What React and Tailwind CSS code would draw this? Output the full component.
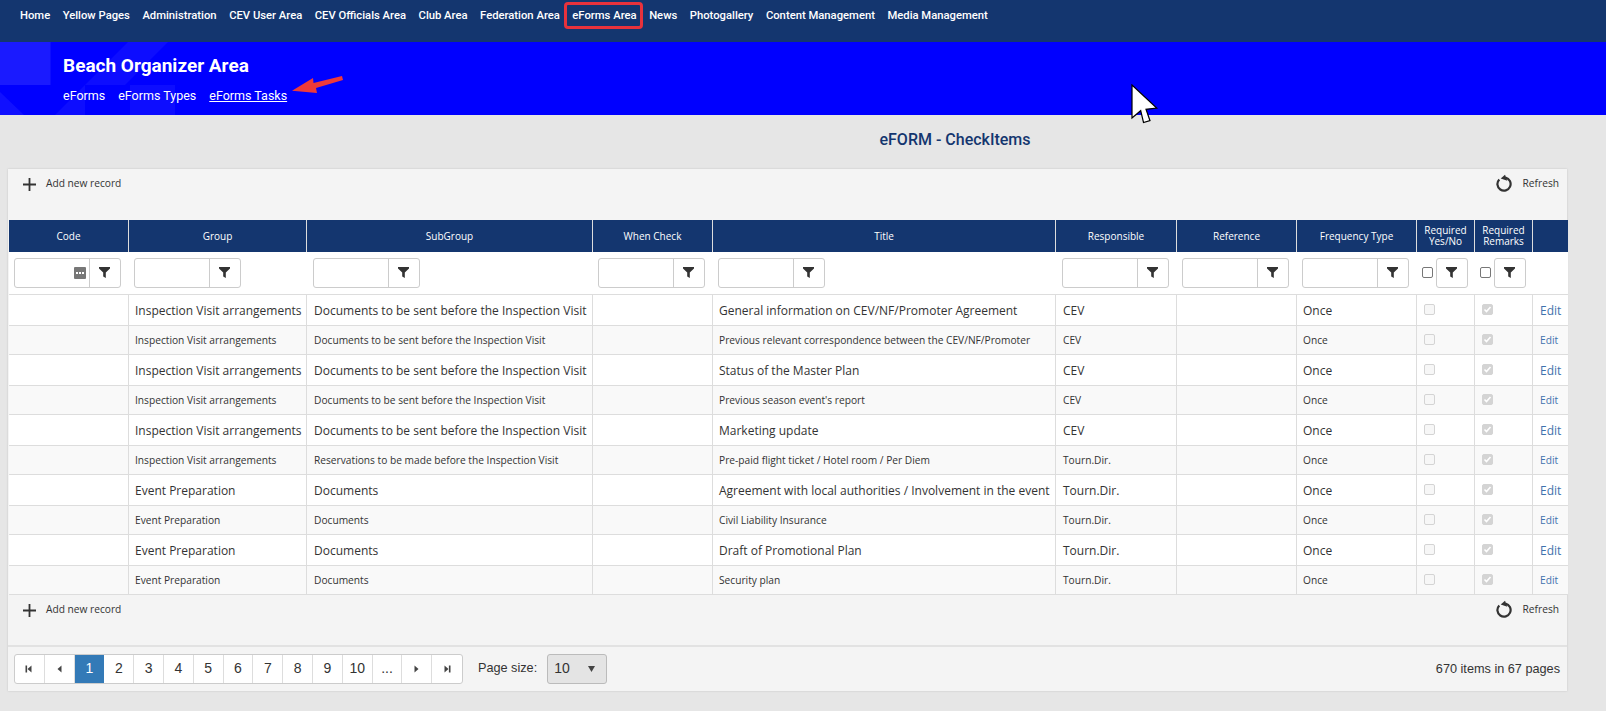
const NAV_ITEMS = [
  'Home',
  'Yellow Pages',
  'Administration',
  'CEV User Area',
  'CEV Officials Area',
  'Club Area',
  'Federation Area',
  'eForms Area',
  'News',
  'Photogallery',
  'Content Management',
  'Media Management',
];

const IV = 'Inspection Visit arrangements';
const DOCS = 'Documents to be sent before the Inspection Visit';
const EP = 'Event Preparation';

const ROWS = [
  [IV, DOCS, 'General information on CEV/NF/Promoter Agreement', 'CEV'],
  [IV, DOCS, 'Previous relevant correspondence between the CEV/NF/Promoter', 'CEV'],
  [IV, DOCS, 'Status of the Master Plan', 'CEV'],
  [IV, DOCS, "Previous season event's report", 'CEV'],
  [IV, DOCS, 'Marketing update', 'CEV'],
  [IV, 'Reservations to be made before the Inspection Visit', 'Pre-paid flight ticket / Hotel room / Per Diem', 'Tourn.Dir.'],
  [EP, 'Documents', 'Agreement with local authorities / Involvement in the event', 'Tourn.Dir.'],
  [EP, 'Documents', 'Civil Liability Insurance', 'Tourn.Dir.'],
  [EP, 'Documents', 'Draft of Promotional Plan', 'Tourn.Dir.'],
  [EP, 'Documents', 'Security plan', 'Tourn.Dir.'],
];

const COLUMNS = [
  { label: 'Code', width: 'w-[120px]' },
  { label: 'Group', width: 'w-[178px]' },
  { label: 'SubGroup', width: 'w-[286px]' },
  { label: 'When Check', width: 'w-[120px]' },
  { label: 'Title', width: 'w-[343px]' },
  { label: 'Responsible', width: 'w-[121px]' },
  { label: 'Reference', width: 'w-[120px]' },
  { label: 'Frequency Type', width: 'w-[120px]' },
  { label: 'Required Yes/No', width: 'w-[58px]' },
  { label: 'Required Remarks', width: 'w-[58px]' },
  { label: '', width: 'w-[35px]' },
];

const PAGES = ['1', '2', '3', '4', '5', '6', '7', '8', '9', '10', '...'];

function FunnelIcon() {
  return (
    <svg width="11" height="11" viewBox="0 0 11 11" className="fill-[#333]">
      <path d="M0 0h11v1.5L6.8 5.4V11L4.2 9.4v-4L0 1.5z" />
    </svg>
  );
}

function RefreshIcon() {
  return (
    <svg width="17" height="18" viewBox="0 0 17 18" fill="none" className="shrink-0">
      <path d="M9.5 3.6A6.6 6.6 0 1 1 3.3 5.4" stroke="#333" strokeWidth="2.2" />
      <path d="M9 0.7l2.3 6-6.6-2.2z" fill="#333" />
    </svg>
  );
}

function PlusIcon() {
  return (
    <svg width="13" height="13" viewBox="0 0 13 13" className="shrink-0 fill-[#333]">
      <path d="M5.6 0h1.8v5.6H13v1.8H7.4V13H5.6V7.4H0V5.6h5.6z" />
    </svg>
  );
}

function PagerArrow({ dir, bar }) {
  return (
    <svg width="8" height="8" viewBox="0 0 8 8" className={`fill-[#444] ${dir === 'left' ? '' : 'rotate-180'}`}>
      <path d="M6.5 0.5v7L2.5 4z" />
      {bar && <path d="M0.5 0.5h1.6v7H0.5z" />}
    </svg>
  );
}

function Toolbar() {
  return (
    <div className="flex justify-between h-[51px] pl-[15px] pr-2 pt-[9px] text-[10.2px] text-[#333]">
      <div className="flex items-start gap-[10px]">
        <PlusIcon />
        <span className="leading-[10px]">Add new record</span>
      </div>
      <div className="flex items-start gap-[10px] -mt-[4px]">
        <RefreshIcon />
        <span className="mt-[3px] leading-[12px]">Refresh</span>
      </div>
    </div>
  );
}

function FilterInput({ hasPicker }) {
  return (
    <div className="flex h-[30px] w-[107px] bg-white border border-[#ccc] rounded-[3px]">
      <div className="flex-1 flex items-center justify-end pr-[3px]">
        {hasPicker && (
          <span className="flex items-center justify-center gap-px w-[12px] h-[12px] bg-[#777] rounded-[1px]">
            <span className="w-[2px] h-[2px] bg-white" />
            <span className="w-[2px] h-[2px] bg-white" />
            <span className="w-[2px] h-[2px] bg-white" />
          </span>
        )}
      </div>
      <div className="w-[31px] border-l border-[#ccc] flex items-center justify-center">
        <FunnelIcon />
      </div>
    </div>
  );
}

function BoolFilter() {
  return (
    <div className="flex items-center gap-[3px]">
      <span className="w-[11px] h-[11px] border border-[#777] rounded-[2px] bg-white" />
      <div className="flex items-center justify-center w-[32px] h-[30px] border border-[#ccc] rounded-[3px] bg-white">
        <FunnelIcon />
      </div>
    </div>
  );
}

function DisabledBox({ checked }) {
  return (
    <span className={`flex items-center justify-center w-[11px] h-[11px] border border-[#d4d4d4] rounded-[2px] ${checked ? 'bg-[#d4d4d4]' : 'bg-[#f7f7f7]'}`}>
      {checked && (
        <svg width="9" height="9" viewBox="0 0 9 9" fill="none">
          <path d="M1.5 4.5l2 2 4-4.5" stroke="#fff" strokeWidth="1.6" />
        </svg>
      )}
    </span>
  );
}

export default function App() {
  return (
    <div className="relative min-h-screen bg-[#e6e6e6] font-['Open_Sans',sans-serif] overflow-hidden">
      {/* Top nav */}
      <nav className="flex items-start h-[42px] bg-[#14366f] pl-5 pt-[8px] gap-[12.5px] font-['Roboto',sans-serif] font-medium text-[11.25px] leading-[16px] text-white">
        {NAV_ITEMS.map((item) => (
          <a key={item} className="relative whitespace-nowrap">
            {item}
            {item === 'eForms Area' && (
              <span className="absolute -left-[8px] -right-[6px] -top-[6px] -bottom-[5px] border-[3px] border-[#e8323c] rounded-[4px]" />
            )}
          </a>
        ))}
      </nav>

      {/* Area banner */}
      <header className="relative h-[73px] bg-[#0000ff] pl-[63px] pt-[12px] font-['Roboto',sans-serif] text-white overflow-hidden">
        <svg width="180" height="73" viewBox="0 0 180 73" className="absolute left-0 top-0">
          <path d="M0 0h50.5v43H0z" fill="#1a1aff" />
          <path d="M0 50l24 23H0z" fill="#1010ff" />
          <path d="M55 73L128 0h40l-43 43H85v30z" fill="#0d0dff" />
          <path d="M130 43h45v30h-45z" fill="#0d0dff" />
        </svg>
        <h1 className="relative text-[19px] font-bold leading-[24px]">Beach Organizer Area</h1>
        <div className="relative flex gap-[13px] mt-[8px] text-[12.5px] leading-[20px]">
          <a>eForms</a>
          <a>eForms Types</a>
          <a className="underline">eForms Tasks</a>
        </div>
      </header>

      <h2 className="text-center h-[54px] pl-[304px] pt-[15px] font-['Roboto',sans-serif] font-medium text-[16px] leading-[20px] text-[#14366f]">
        eFORM - CheckItems
      </h2>

      {/* Grid card */}
      <section className="ml-2 w-[1559px] bg-[#f4f4f4] shadow-[0_0_2px_rgba(0,0,0,0.15)]">
        <Toolbar />

        <table className="w-full table-fixed border-collapse">
          <colgroup>
            {COLUMNS.map((col, i) => (
              <col key={i} className={col.width} />
            ))}
          </colgroup>
          <thead>
            <tr className="h-[32px] bg-[#14366f] text-white text-[10px] leading-[11px] font-normal">
              {COLUMNS.map((col, i) => (
                <th key={i} className="font-normal border-l border-[#ddd] first:border-[#f4f4f4] px-1">
                  {col.label}
                </th>
              ))}
            </tr>
            <tr className="h-[42px] bg-white border-b border-[#ddd]">
              {COLUMNS.slice(0, 8).map((col, i) => (
                <th key={col.label} className={i === 2 || i === 5 ? 'pl-[6px] font-normal' : 'pl-[5px] font-normal'}>
                  <FilterInput hasPicker={i === 0} />
                </th>
              ))}
              <th className="pl-[5px]"><BoolFilter /></th>
              <th className="pl-[5px]"><BoolFilter /></th>
              <th />
            </tr>
          </thead>
          <tbody>
            {ROWS.map((row, i) => {
              const alt = i % 2 === 1;
              const pad = alt ? 'pt-0' : 'pt-[2px]';
              return (
                <tr
                  key={i}
                  className={alt
                    ? 'h-[29px] bg-[#f9f9f9] text-[10.2px] leading-[14px] text-[#333] border-b border-[#ddd]'
                    : 'h-[31px] bg-white text-[12px] leading-[16px] text-[#333] border-b border-[#ddd]'}
                >
                  <td className="border-r border-[#ddd]" />
                  <td className={`border-r border-[#ddd] px-[6px] whitespace-nowrap ${pad}`}>{row[0]}</td>
                  <td className={`border-r border-[#ddd] px-[7px] whitespace-nowrap ${pad}`}>{row[1]}</td>
                  <td className="border-r border-[#ddd]" />
                  <td className={`border-r border-[#ddd] px-[6px] whitespace-nowrap ${pad}`}>{row[2]}</td>
                  <td className={`border-r border-[#ddd] px-[7px] whitespace-nowrap ${pad}`}>{row[3]}</td>
                  <td className="border-r border-[#ddd]" />
                  <td className={`border-r border-[#ddd] px-[6px] ${pad}`}>Once</td>
                  <td className="border-r border-[#ddd] pl-[7px]"><DisabledBox /></td>
                  <td className="border-r border-[#ddd] pl-[7px]"><DisabledBox checked /></td>
                  <td className={`pl-[7px] text-[#3f72ad] ${pad}`}>Edit</td>
                </tr>
              );
            })}
          </tbody>
        </table>

        <div className="h-[52px] border-b-2 border-[#e2e2e2]">
          <Toolbar />
        </div>

        {/* Pager */}
        <div className="flex items-center h-[44px] pl-[6px] pr-[7px] font-['Liberation_Sans',sans-serif] text-[12.7px] text-[#333]">
          <div className="flex h-[30px] bg-white border border-[#ccc] rounded-[3px] overflow-hidden">
            <span className="w-[29.8px] flex items-center justify-center border-r border-[#ddd]"><PagerArrow dir="left" bar /></span>
            <span className="w-[29.8px] flex items-center justify-center border-r border-[#ddd]"><PagerArrow dir="left" /></span>
            {PAGES.map((page, i) => (
              <span
                key={page}
                className={i === 0
                  ? 'w-[29.8px] flex items-center justify-center bg-[#337ab7] text-white text-[14px]'
                  : 'w-[29.8px] flex items-center justify-center border-r border-[#ddd] text-[14px]'}
              >
                {page}
              </span>
            ))}
            <span className="w-[29.8px] flex items-center justify-center border-r border-[#ddd]"><PagerArrow dir="right" /></span>
            <span className="w-[29.8px] flex items-center justify-center"><PagerArrow dir="right" bar /></span>
          </div>
          <span className="ml-[15px]">Page size:</span>
          <div className="flex items-center justify-between ml-[10px] w-[60px] h-[30px] pl-[6px] pr-[11px] bg-[#e4e4e4] border border-[#bbb] rounded-[3px] text-[14px]">
            <span>10</span>
            <svg width="7" height="6" viewBox="0 0 7 6" className="fill-[#444]">
              <path d="M0 0h7L3.5 6z" />
            </svg>
          </div>
          <span className="ml-auto pt-[2px]">670 items in 67 pages</span>
        </div>
      </section>

      {/* Annotation arrow */}
      <svg width="60" height="24" viewBox="0 0 60 24" className="absolute left-[288px] top-[72px] fill-[#ee3a3a]">
        <path d="M4 18.7L25 6l.5 5L54 4l1 4-27 8 1 5z" />
      </svg>

      {/* Mouse pointer */}
      <svg width="30" height="42" viewBox="0 0 30 42" className="absolute left-[1131px] top-[84px]">
        <path d="M1 1v33l8.7-7.3 2.8 11.8 6.5-1.8-4-11.4 10.7-1.3z" fill="#fff" stroke="#000" strokeWidth="1.2" />
      </svg>
    </div>
  );
}
